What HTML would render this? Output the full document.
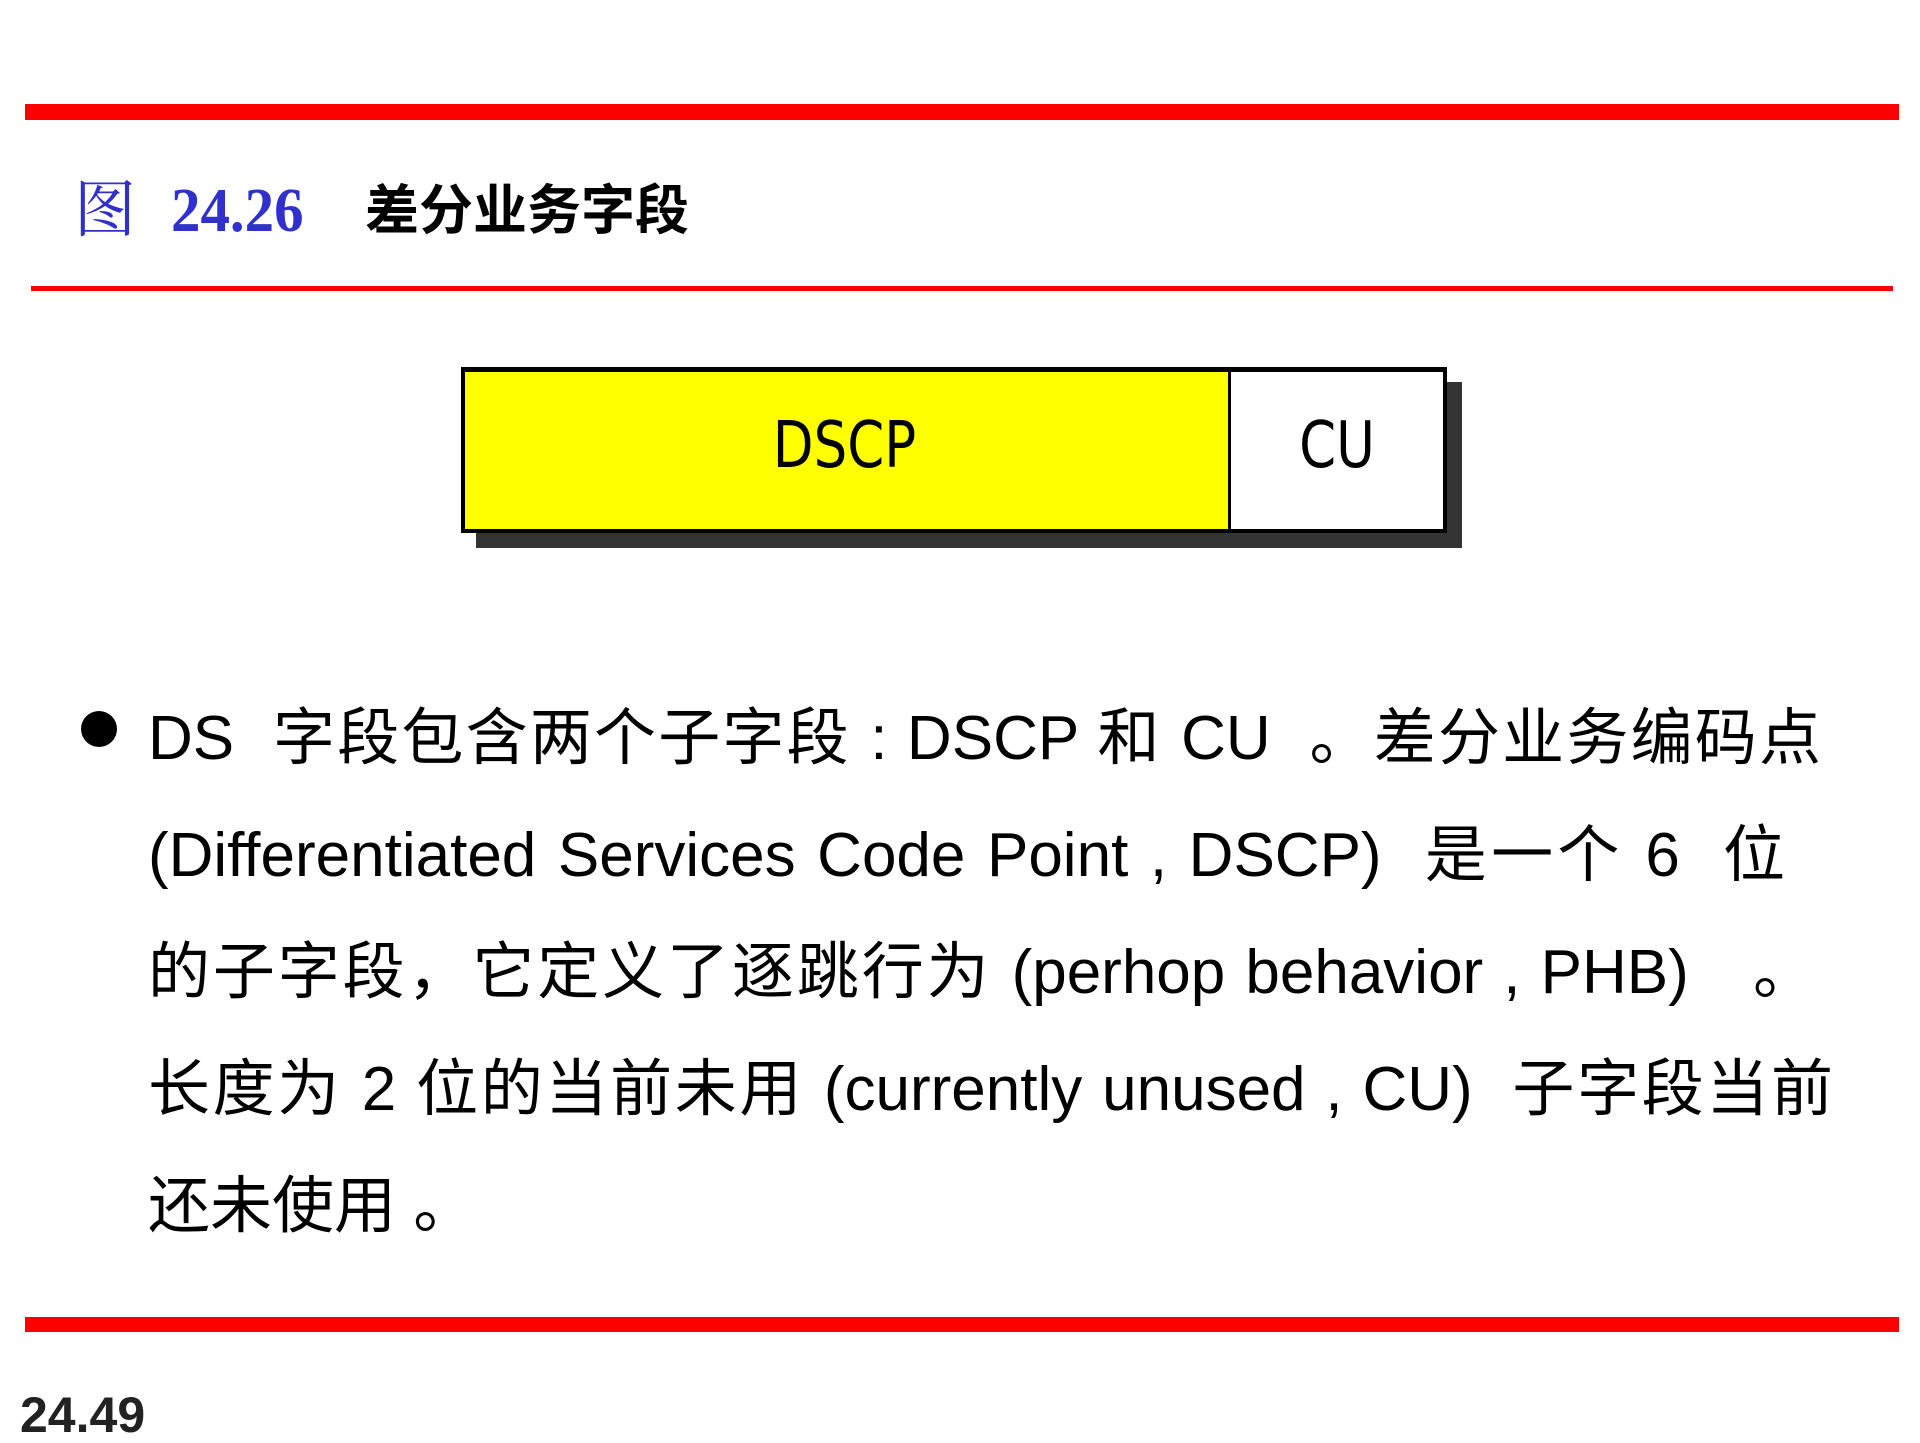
<!DOCTYPE html>
<html><head><meta charset="utf-8"><style>
body{margin:0;width:1920px;height:1440px;background:#fff;position:relative;overflow:hidden;font-family:"Liberation Sans","Noto Sans CJK SC",sans-serif;}
.a{position:absolute;}
.ln{position:absolute;left:148px;white-space:nowrap;font-size:62px;line-height:70px;color:#000;text-align:justify;text-align-last:justify;}
</style></head><body>
<div class="a" style="left:25px;top:104px;width:1874px;height:16px;background:#f00"></div>
<div class="a" style="left:74px;top:176px;font-size:62px;line-height:70px;color:#3030cc;font-family:'Liberation Serif','Noto Serif CJK SC',serif;white-space:nowrap">图</div>
<div class="a" style="left:171px;top:176px;font-size:62px;line-height:70px;color:#3030cc;font-weight:bold;font-family:'Liberation Serif',serif;white-space:nowrap;transform:scaleX(0.95);transform-origin:left">24.26</div>
<div class="a" style="left:365px;top:178px;font-size:54px;line-height:66px;color:#000;font-weight:bold;font-family:'Liberation Sans','Noto Sans CJK SC',sans-serif;white-space:nowrap">差分业务字段</div>
<div class="a" style="left:31px;top:286px;width:1862px;height:5px;background:#f00"></div>

<div class="a" style="left:476px;top:382px;width:986px;height:166px;background:#333"></div>
<div class="a" style="left:461px;top:367px;border:4px solid #000;border-top-width:5px;background:#ff0;width:978px;height:157px"></div>
<div class="a" style="left:1228px;top:372px;width:212px;height:157px;background:#fff;border-left:3px solid #000"></div>
<div class="a" style="left:461px;top:411px;width:767px;text-align:center;font-size:64px;line-height:70px;font-family:'DejaVu Sans Condensed','Liberation Sans Narrow',sans-serif;transform:scaleX(0.92)">DSCP</div>
<div class="a" style="left:1231px;top:411px;width:212px;text-align:center;font-size:64px;line-height:70px;font-family:'DejaVu Sans Condensed','Liberation Sans Narrow',sans-serif;transform:scaleX(0.92)">CU</div>

<div class="a" style="left:81px;top:711px;width:36px;height:36px;border-radius:50%;background:#000"></div>
<div class="ln" style="top:704px;width:1673px">DS&nbsp; 字段包含两个子字段 : DSCP 和 CU&nbsp; 。差分业务编码点</div>
<div class="ln" style="top:821px;width:1637px">(Differentiated Services Code Point , DSCP)&nbsp; 是一个 6&nbsp; 位</div>
<div class="ln" style="top:938px;width:1558px">的子字段，它定义了逐跳行为 (perhop behavior , PHB)&nbsp;</div>
<div class="a" style="left:1753px;top:938px;font-size:62px;line-height:70px">。</div>
<div class="ln" style="top:1055px;width:1685px">长度为 2 位的当前未用 (currently unused , CU)&nbsp; 子字段当前</div>
<div class="ln" style="top:1172px;text-align:left;text-align-last:left">还未使用 。</div>

<div class="a" style="left:25px;top:1317px;width:1874px;height:15px;background:#f00"></div>
<div class="a" style="left:20px;top:1387px;font-size:50px;line-height:56px;font-weight:bold;color:#222">24.49</div>
</body></html>
